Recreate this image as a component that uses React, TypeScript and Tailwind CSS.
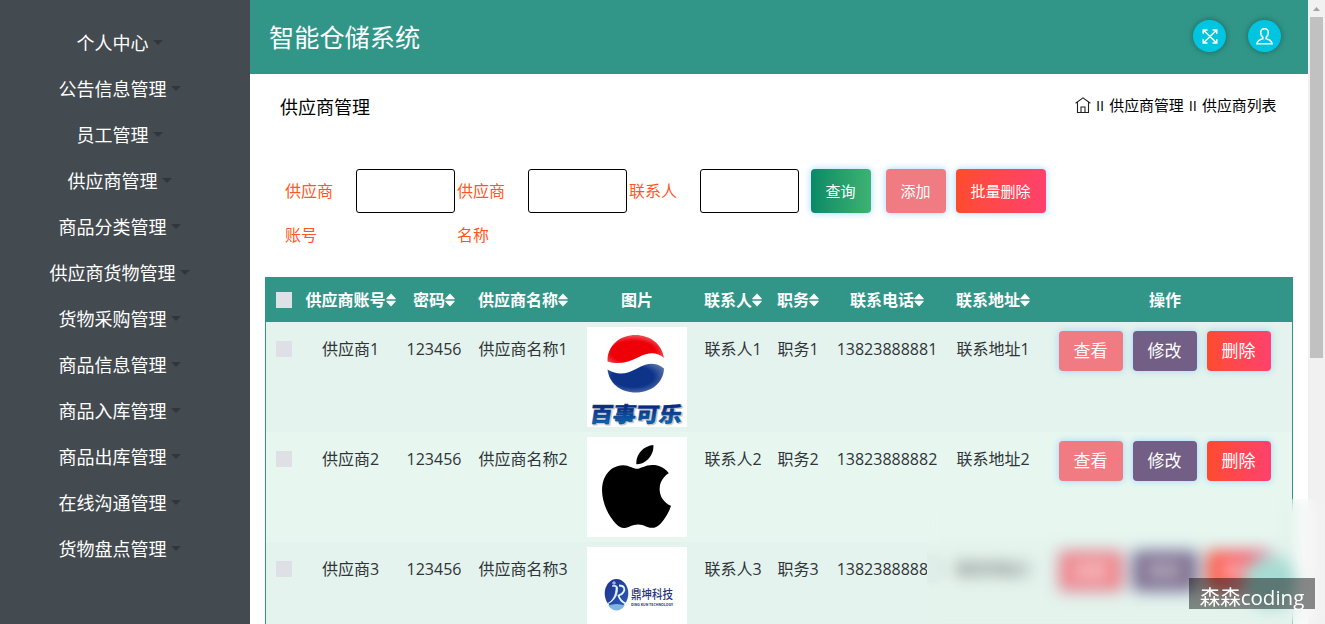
import React from "react";
import { SiApple } from "react-icons/si";

const menu = ["个人中心", "公告信息管理", "员工管理", "供应商管理", "商品分类管理", "供应商货物管理", "货物采购管理", "商品信息管理", "商品入库管理", "商品出库管理", "在线沟通管理", "货物盘点管理"];

const heads = ["供应商账号", "密码", "供应商名称", "图片", "联系人", "职务", "联系电话", "联系地址"];

const cols = "grid grid-cols-[36px_97px_70px_108px_120px_72px_58px_120px_92px_1fr]";

function SortIcon() {
  return (
    <svg width="10" height="14" viewBox="0 0 10 14" fill="#fff" className="shrink-0">
      <path d="M5 .6 9.700 5.400Q10 6.200 9.300 6.200H.7Q0 6.200 .3 5.400ZM5 13.400 9.700 8.600Q10 7.800 9.300 7.800H.7Q0 7.800 .3 8.600Z" />
    </svg>
  );
}

function HomeIcon() {
  return (
    <svg width="16" height="16" viewBox="0 0 16 16" fill="none" stroke="#222" strokeWidth="1.1">
      <path d="M.6 6.300 8 .9l7.400 5.400M2.500 5.500v10h11v-10M6 15.500v-5.500h4v5.500" />
    </svg>
  );
}

function ExpandIcon() {
  return (
    <svg width="16" height="15" viewBox="0 0 16 15" fill="none" stroke="#fff" strokeWidth="1.5">
      <path d="M1.200 4.800V1h4.300M10.500 1h4.300v3.800M14.800 10.200V14h-4.300M5.500 14H1.200v-3.800M1.500 1.200l13 12.600M14.500 1.200l-13 12.600" />
    </svg>
  );
}

function UserIcon() {
  return (
    <svg width="17" height="17" viewBox="0 0 17 17" fill="none" stroke="#fff" strokeWidth="1.500">
      <path d="M8.500.8c2.500 0 3.800 1.500 3.800 3.800 0 2-.9 3.700-2.100 4.600v1.600c2.700.7 5.500 1.600 5.900 4.900H.9c.4-3.300 3.200-4.200 5.900-4.900V9.200C5.600 8.300 4.700 6.600 4.700 4.600 4.700 2.300 6 .8 8.500.8Z" />
    </svg>
  );
}

function ColaLogo() {
  return (
    <svg width="100" height="100" viewBox="0 0 100 100" className="overflow-visible bg-white">
      <defs>
        <radialGradient id="red" cx=".45" cy=".6" r=".6">
          <stop offset=".65" stopColor="#ee0008" />
          <stop offset="1" stopColor="#f2545c" />
        </radialGradient>
        <radialGradient id="blue" cx=".45" cy=".45" r=".6">
          <stop offset=".6" stopColor="#0d3488" />
          <stop offset="1" stopColor="#5670ae" />
        </radialGradient>
        <linearGradient id="word" x1="0" y1="0" x2="0" y2="1">
          <stop offset=".35" stopColor="#0b2c80" />
          <stop offset="1" stopColor="#0878bd" />
        </linearGradient>
      </defs>
      <path d="M20.500 31.500C22 17 34 8 48.500 8 63 8 75 17 77 31 70 25 62 25 52 30c-11 5.500-21 8-31.500 4.500Z" fill="url(#red)" />
      <path d="M20.500 42.500C31 49 40 47 50 41.500c10-5.500 18-7 27 0C76.500 56 64 65.500 49 65.500 33 65.500 22 56 20.500 42.500Z" fill="url(#blue)" />
      <g transform="translate(2 94.500) skewX(-9)" fontFamily="Noto Sans CJK SC" fontWeight="900" fontSize="21">
        <text x="1.500" y="1.500" textLength="92" lengthAdjust="spacingAndGlyphs" fill="#c9c9c9" stroke="#c9c9c9">百事可乐</text>
        <text textLength="92" lengthAdjust="spacingAndGlyphs" fill="url(#word)" stroke="#0b3c90" strokeWidth=".4">百事可乐</text>
      </g>
    </svg>
  );
}

function AppleLogo() {
  return (
    <div className="flex h-[100px] w-[100px] justify-center bg-white pt-2 pr-[2px]">
      <SiApple size={83} color="#000" className="scale-x-[1.020]" />
    </div>
  );
}

function TechLogo() {
  return (
    <svg width="100" height="100" viewBox="0 0 100 100" className="overflow-visible bg-white">
      <defs>
        <linearGradient id="orb" x1="0" y1="0" x2="1" y2="1">
          <stop offset="0" stopColor="#1c2f8c" />
          <stop offset="1" stopColor="#2c5db5" />
        </linearGradient>
      </defs>
      <ellipse cx="29.500" cy="46.500" rx="11.800" ry="14.500" fill="url(#orb)" />
      <path d="M21 58.500q8.500-3 17 0-8.500 10-17 0Z" fill="#7db4e2" />
      <path d="M21 56.500c5-3 8.500-9 8-17l-4-.5c2-1 5-1 5.500 1.500.3 6-2 13-9.500 16Z" fill="#e4f5ff" stroke="#e4f5ff" strokeWidth=".8" />
      <path d="M32 38.500c5 0 6.500 3 4.500 6.500-1 2-3 3-5 3.500 1 4 4 6.500 7 8" fill="none" stroke="#e4f5ff" strokeWidth="1.800" />
      <path d="M27 34v4M25 36h4" stroke="#e4f5ff" strokeWidth=".8" />
      <g fontFamily="Noto Sans CJK SC" fill="#25357e">
        <text x="44" y="51.500" fontSize="12" fontWeight="500" textLength="42" lengthAdjust="spacingAndGlyphs">鼎坤科技</text>
        <text x="44" y="58.500" fontSize="4" fontWeight="700" textLength="42" lengthAdjust="spacingAndGlyphs">DING KUN TECHNOLOGY</text>
      </g>
    </svg>
  );
}

const rows = [
  { n: 1, logo: <ColaLogo />, bg: "bg-[#e4f3ed]" },
  { n: 2, logo: <AppleLogo />, bg: "bg-[#e7f7f0]" },
  { n: 3, logo: <TechLogo />, bg: "bg-[#e4f3ed]" },
];

const glow = "rounded-[4px] text-white shadow-[0_0_6px_1px_rgba(140,200,255,0.6)]";
const action = "flex h-10 w-16 items-center justify-center pr-px text-[17px] " + glow;

function Field({ label }: { label: string }) {
  return (
    <div className="flex w-[172px]">
      <div className="w-[71px] pr-[20px] text-base leading-[44px] text-[#ff5722]">{label}</div>
      <div className="h-11 w-[99px] rounded-[3px] border border-black bg-white" />
    </div>
  );
}

export default function App() {
  return (
    <div className="relative flex h-[624px] w-[1325px] overflow-hidden bg-white font-['Open_Sans','Noto_Sans_CJK_SC',sans-serif] text-[#303438]">
      <aside className="w-[250px] shrink-0 bg-[#444b50] pt-5 pr-[10.500px]">
        {menu.map((m) => (
          <div key={m} className="flex h-[46px] items-center justify-center pb-px text-lg text-white">
            {m}
            <span className="ml-[4.600px] border-x-[5.400px] border-t-[5.400px] border-x-transparent border-t-[#30373a]" />
          </div>
        ))}
      </aside>

      <main className="flex w-[1058px] shrink-0 flex-col">
        <header className="flex h-[74px] shrink-0 items-center justify-between bg-[#319688] pr-[27px] pl-[19px] text-white">
          <h1 className="pt-0.5 text-[25.200px]">智能仓储系统</h1>
          <div className="flex gap-[22px] pb-0.5">
            <span className="flex h-8 w-[33px] items-center justify-center rounded-full bg-[#00c5e0] shadow-[0_0_6px_rgba(0,0,0,0.35)]"><ExpandIcon /></span>
            <span className="flex h-8 w-[33px] items-center justify-center rounded-full bg-[#00c5e0] shadow-[0_0_6px_rgba(0,0,0,0.35)]"><UserIcon /></span>
          </div>
        </header>

        <div className="flex h-[64px] shrink-0 items-center justify-between pr-[31.500px] pl-[30px] text-black">
          <h2 className="pt-px text-lg">供应商管理</h2>
          <div className="flex items-center gap-[5px] pb-px text-[14.900px]">
            <HomeIcon />
            <span>II</span>
            <span>供应商管理</span>
            <span>II</span>
            <span>供应商列表</span>
          </div>
        </div>

        <div className="flex h-[139px] shrink-0 pt-[31px] pl-[35px]">
          <Field label="供应商账号" />
          <Field label="供应商名称" />
          <Field label="联系人" />
          <div className={"ml-[10px] flex h-11 w-[60px] items-center justify-center bg-linear-to-r from-[#068a66] to-[#3cb371] pr-px text-[15px] " + glow}>查询</div>
          <div className={"ml-[15px] flex h-11 w-[60px] items-center justify-center bg-[#f07b83] pr-px text-[15px] " + glow}>添加</div>
          <div className={"ml-[10px] flex h-11 w-[90px] items-center justify-center bg-linear-to-r from-[#ff4b2b] to-[#ff416c] pr-px text-[15px] " + glow}>批量删除</div>
        </div>

        <section className="mx-[15px] border-x border-[#319688]">
          <div className={cols + " h-[45px] items-center bg-[#319688] font-bold text-white"}>
            <div className="ml-[10px] h-4 w-4 bg-[#dee2e6]" />
            {heads.map((h) => (
              <div key={h} className="flex items-center justify-center whitespace-nowrap">
                {h}
                {h !== "图片" && <SortIcon />}
              </div>
            ))}
            <div className="pr-px text-center">操作</div>
          </div>
          {rows.map(({ n, logo, bg }) => (
            <div key={n} className={cols + " h-[110px] text-center leading-[54px] whitespace-nowrap " + bg}>
              <div className="mt-[19px] ml-[10px] h-4 w-4 bg-[#dee0e6]" />
              <div>供应商{n}</div>
              <div>123456</div>
              <div>供应商名称{n}</div>
              <div className="flex justify-center pt-[5px]">{logo}</div>
              <div>联系人{n}</div>
              <div>职务{n}</div>
              <div>1382388888{n}</div>
              <div>联系地址{n}</div>
              <div className="flex gap-[10px] pt-[9px] pl-[20px]">
                <span className={action + " bg-[#f07b83]"}>查看</span>
                <span className={action + " bg-[#735f85]"}>修改</span>
                <span className={action + " bg-linear-to-r from-[#ff4b2b] to-[#ff416c]"}>删除</span>
              </div>
            </div>
          ))}
        </section>
      </main>

      <div className="flex w-[17px] shrink-0 flex-col items-center bg-[#f1f1f1]">
        <svg width="17" height="17" viewBox="0 0 17 17"><path d="M5 11h7L8.500 7Z" fill="#a3a3a3" /></svg>
        <div className="h-[341px] w-[13px] bg-[#c1c1c1]" />
      </div>

      <div className="absolute top-[555px] left-[1243px] h-[54px] w-[54px] rounded-full bg-[#a0d9d1]" />
      <div className="absolute top-[499px] left-[927px] h-[125px] w-[398px] bg-[#e7f5ef]/10 backdrop-blur-[7.500px]" />
      <div className="absolute top-[556px] left-[927px] h-[27px] w-[14px] bg-linear-to-r from-[#dfeee8] from-60% to-[#e2f1eb]/30" />
      <div className="absolute top-[578px] left-[1189px] flex h-[31px] w-[126px] items-center justify-center bg-black/45 pt-2 text-[20.500px] leading-none text-white">森森coding</div>
    </div>
  );
}
